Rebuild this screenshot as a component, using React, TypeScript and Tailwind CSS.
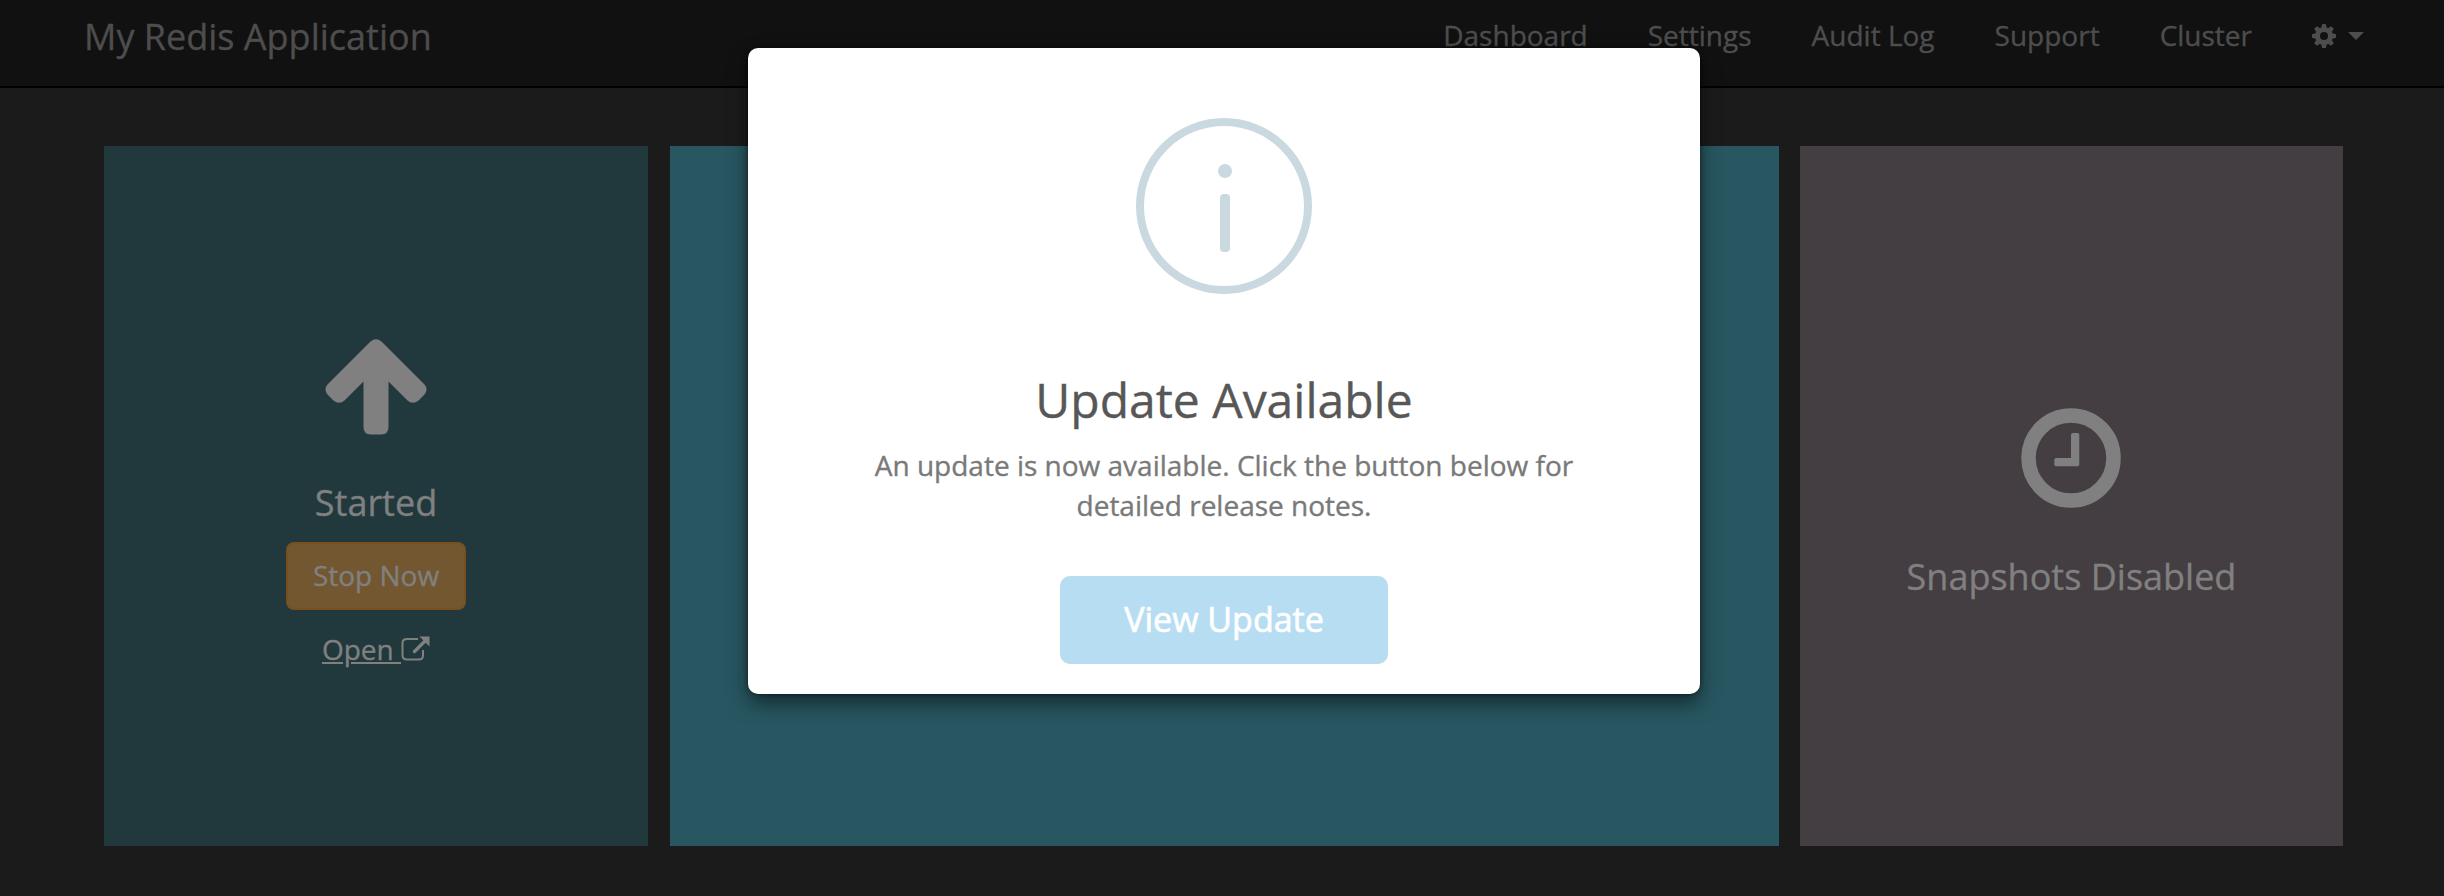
import React from "react";

const NAV = ["Dashboard", "Settings", "Audit Log", "Support", "Cluster"];

function Cog() {
  const teeth = [0, 45, 90, 135, 180, 225, 270, 315];
  return (
    <svg className="size-6" viewBox="0 0 24 24" fill="currentColor">
      {teeth.map((a) => (
        <path key={a} d="M9.3 4 L10 0.6 Q10.1 0 10.8 0 H13.200 Q13.900 0 14 0.6 L14.700 4 Z" transform={`rotate(${a} 12 12)`} />
      ))}
      <path fillRule="evenodd" d="M12 3a9 9 0 1 0 0 18a9 9 0 1 0 0-18zM12 8a4 4 0 1 1 0 8a4 4 0 1 1 0-8z" />
    </svg>
  );
}

function ArrowUp() {
  return (
    <svg className="h-[96px] w-[102px]" viewBox="0 0 102 96" fill="currentColor">
      <path d="M45.5 2.5Q51 -2 56.5 2.5L99.5 45.5Q103.5 50 99.5 55.5L93.5 61.5Q88 66 82.5 61.5L63.5 42.5V88Q63.5 95.5 56 95.5H46Q38.5 95.5 38.5 88V42.5L19.5 61.5Q14 66 8.500 61.500L2.500 55.500Q-1.500 50 2.500 45.500Z" />
    </svg>
  );
}

function Clock() {
  return (
    <svg className="mr-[2px] size-[100px]" viewBox="0 0 100 100" fill="none">
      <circle cx="50" cy="50" r="42.5" stroke="currentColor" strokeWidth="14.5" />
      <path fill="currentColor" d="M52 25H56.500Q58.300 25 58.300 27V56.500Q58.300 58.300 56.500 58.300H35Q33.300 58.300 33.300 56.500V52Q33.300 50 35 50H50V27Q50 25 52 25Z" />
    </svg>
  );
}

function OpenWindow() {
  return (
    <svg className="h-[26px] w-[29px]" viewBox="0 0 29 26" fill="none" stroke="currentColor">
      <path strokeWidth="2" d="M17 3H6Q1.500 3 1.500 7V19.500Q1.500 23.500 6 23.500H18Q22 23.500 22 19.500V14" />
      <path strokeWidth="3.400" strokeLinecap="round" d="M13.500 15.500L24 5" />
      <path fill="currentColor" stroke="none" d="M18.500 0.500H28.500V10.500Z" />
    </svg>
  );
}

export default function App() {
  return (
    <div className="relative flex h-[896px] w-[2444px] flex-col overflow-hidden bg-[#1b1b1b] font-['Open_Sans',sans-serif] text-[#808080] [-webkit-text-stroke:0.35px_currentColor]">
      <header className="flex h-[88px] shrink-0 items-start justify-between border-b-2 border-black bg-[#111111] pl-[84px] pr-[80px] text-[#4d4d4d]">
        <div className="pt-[12px] text-[36px] leading-[50px]">My Redis Application</div>
        <nav className="flex items-center gap-[60px] pt-[15px] text-[28px] leading-[40px]">
          {NAV.map((n) => (
            <a key={n}>{n}</a>
          ))}
          <a className="flex items-center gap-[12px] pt-[2px]">
            <Cog />
            <svg className="h-2 w-4" viewBox="0 0 16 8" fill="currentColor">
              <path d="M0 0H16L8 8Z" />
            </svg>
          </a>
        </nav>
      </header>

      <main className="flex gap-x-[22px] pl-[104px] pt-[58px]">
        <section className="flex h-[700px] w-[544px] flex-col items-center bg-[#21393d] pt-[193px]">
          <ArrowUp />
          <h2 className="mt-[42px] text-[36px] leading-[52px]">Started</h2>
          <button className="mt-[13px] h-[68px] w-[180px] rounded-[8px] border-2 border-[#784f1f] bg-[#735730] pb-[2px] text-[28px]">Stop Now</button>
          <a className="mt-[19px] flex items-center text-[28px] leading-[40px]">
            <span className="whitespace-pre underline">Open </span>
            <OpenWindow />
          </a>
        </section>
        <section className="h-[700px] w-[1109px] bg-[#285761]" />
        <section className="-ml-px flex h-[700px] w-[543px] flex-col items-center bg-[#443d41] pt-[262px]">
          <Clock />
          <h2 className="mt-[43px] text-[36px] leading-[52px]">Snapshots Disabled</h2>
        </section>
      </main>

      <div className="absolute left-[748px] top-[48px] flex h-[646px] w-[952px] flex-col items-center rounded-[10px] bg-white pt-[70px] text-center shadow-[0_10px_20px_rgba(0,0,0,0.5),0_0_4px_rgba(0,0,0,0.5)]">
        <div className="flex size-[176px] shrink-0 flex-col items-center rounded-full border-8 border-[#cad9df] pl-[2px] pt-[38px]">
          <span className="size-[14px] rounded-full bg-[#cad9df]" />
          <span className="mt-[16px] h-[58px] w-[10px] rounded-[4px] bg-[#cad9df]" />
        </div>
        <h1 className="mt-[66px] text-[48px] leading-[80px] text-[#575757]">Update Available</h1>
        <p className="mt-[5px] w-[760px] text-[28px] leading-[40px] text-[#797979]">
          An update is now available. Click the button below for detailed release notes.
        </p>
        <button className="mt-[51px] h-[88px] w-[328px] rounded-[10px] bg-[#b7ddf2] pb-px text-[34px] text-white [-webkit-text-stroke:0.7px_currentColor]">View Update</button>
      </div>
    </div>
  );
}
